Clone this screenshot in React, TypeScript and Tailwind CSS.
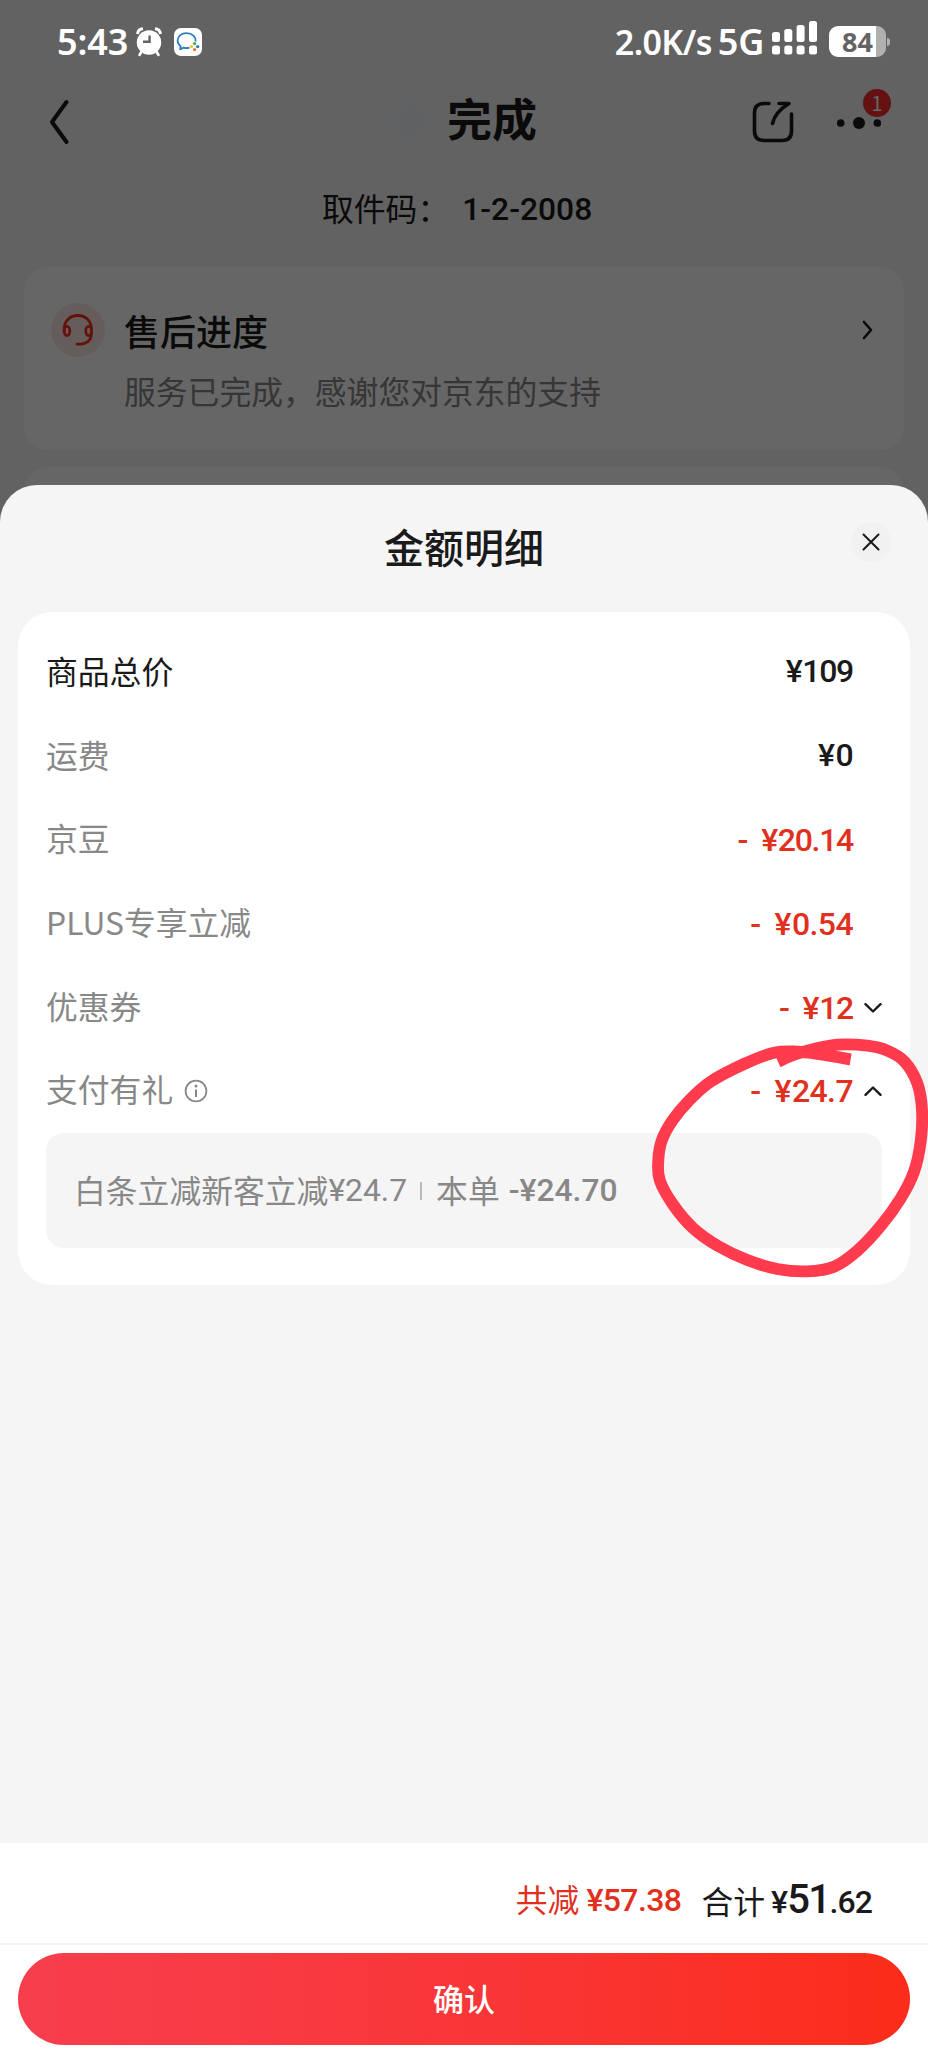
import type { ReactNode } from "react";

const PRICE_ROWS: {
  label: string;
  amount: string;
  discount?: boolean;
  strong?: boolean;
  info?: boolean;
  arrow?: "up" | "down";
}[] = [
  { label: "商品总价", amount: "¥109", strong: true },
  { label: "运费", amount: "¥0" },
  { label: "京豆", amount: "¥20.14", discount: true },
  { label: "PLUS专享立减", amount: "¥0.54", discount: true },
  { label: "优惠券", amount: "¥12", discount: true, arrow: "down" },
  { label: "支付有礼", amount: "¥24.7", discount: true, info: true, arrow: "up" },
];

const RING_POINTS: [number, number][] = [
  [1160, 328], [1070, 313], [1000, 305], [930, 308], [840, 342], [740, 395], [675, 452],
  [625, 512], [593, 572], [583, 630], [587, 690], [628, 765], [688, 835], [762, 888],
  [850, 930], [940, 957], [1030, 964], [1110, 950], [1180, 902], [1250, 828], [1310, 745],
  [1350, 665], [1370, 575], [1374, 480], [1360, 400], [1322, 335], [1270, 302], [1210, 287],
  [1120, 284], [1050, 297], [990, 314], [942, 335],
];

// Catmull-Rom through the points, written out as cubic beziers
function smoothPath(points: [number, number][]) {
  let d = `M${points[0][0]} ${points[0][1]}`;
  for (let i = 0; i < points.length - 1; i++) {
    const p0 = points[i - 1] ?? points[i];
    const p1 = points[i];
    const p2 = points[i + 1];
    const p3 = points[i + 2] ?? p2;
    d += ` C${p1[0] + (p2[0] - p0[0]) / 6} ${p1[1] + (p2[1] - p0[1]) / 6}`;
    d += ` ${p2[0] - (p3[0] - p1[0]) / 6} ${p2[1] - (p3[1] - p1[1]) / 6} ${p2[0]} ${p2[1]}`;
  }
  return d;
}

function Num({ className = "", children }: { className?: string; children: ReactNode }) {
  return (
    <span className={`font-[Roboto,'Noto_Sans_CJK_SC',sans-serif] font-medium whitespace-pre ${className}`}>
      {children}
    </span>
  );
}

function StatusBar() {
  return (
    <div className="relative z-10 flex h-[83px] items-center pl-[57px] text-white">
      <span className="w-[79px] text-[36px] leading-none font-semibold tracking-[-0.1px] font-['Noto_Sans',sans-serif]">5:43</span>
      <svg className="h-[30px] w-[26px]" viewBox="0 0 26 30" fill="none">
        <circle cx="13" cy="15.5" r="12.2" fill="#fff" />
        <path d="M1.5 7 A6 6 0 0 1 7 1.8 M19 1.8 A6 6 0 0 1 24.5 7" stroke="#fff" strokeWidth="3" />
        <path d="M6 24 L3.5 28 M20 24 L22.5 28" stroke="#fff" strokeWidth="2.6" strokeLinecap="round" />
        <path d="M13.6 8.5 V14.8 H7" stroke="#636363" strokeWidth="2.4" />
      </svg>
      <svg className="ml-[12px] h-7 w-7" viewBox="0 0 28 28" fill="none">
        <rect width="28" height="28" rx="7" fill="#fff" />
        <path d="M21.5 13.5 C22 9 18.5 5.2 12.5 5.2 C7 5.2 3.6 8.6 3.6 12.7 C3.6 15.1 4.8 16.8 6.6 18.2 L6.2 21.4 L9.6 19.6 C11.2 20.2 13.5 20.2 15.4 19.6" stroke="#2f7ec4" strokeWidth="1.8" strokeLinejoin="round" />
        <circle cx="20.6" cy="15.6" r="1.7" fill="#4caf50" />
        <circle cx="23.6" cy="18.6" r="1.7" fill="#2f7ec4" />
        <circle cx="20.6" cy="21.6" r="1.7" fill="#f0743a" />
        <circle cx="17.4" cy="18.6" r="1.7" fill="#f4c430" />
      </svg>
      <div className="ml-auto flex items-center pr-[38px] font-['Noto_Sans',sans-serif] font-semibold">
        <span className="text-[34px] leading-none tracking-[-0.6px]">2.0K/s</span>
        <span className="ml-[6px] text-[36px] leading-none tracking-[-0.3px]">5G</span>
        <svg className="mb-[7px] ml-[8px] h-[34px] w-[46px]" viewBox="0 0 46 34" fill="#fff">
          <rect x="0" y="11" width="8" height="10" rx="2.5" />
          <rect x="12.3" y="8" width="8" height="13" rx="2.5" />
          <rect x="24.6" y="4" width="8" height="17" rx="2.5" />
          <rect x="37" y="0" width="8" height="21" rx="2.5" />
          <rect x="0" y="24.5" width="8" height="9" rx="2.5" />
          <rect x="12.3" y="24.5" width="8" height="9" rx="2.5" />
          <rect x="24.6" y="24.5" width="8" height="9" rx="2.5" />
          <rect x="37" y="24.5" width="8" height="9" rx="2.5" />
        </svg>
        <div className="ml-[11px] flex h-[31px] w-[57px] items-center justify-center rounded-[9px] bg-[linear-gradient(90deg,#fff_83%,#b0b0b0_83%)] text-[27px] leading-[31px] font-bold text-[#636363]">
          84
        </div>
        <div className="ml-[1px] h-2 w-[3px] rounded-r-full bg-[#b0b0b0]" />
      </div>
    </div>
  );
}

function PageHeader() {
  return (
    <header className="flex h-[76px] items-center pl-[48px]">
      <svg className="h-[46px] w-6" viewBox="0 0 24 46" fill="none" stroke="#1a1a1a" strokeWidth="4" strokeLinecap="round" strokeLinejoin="round">
        <path d="M18.5 4 L4 24 L18.5 44" />
      </svg>
      <div className="ml-[322px] h-8 w-8 rounded-full bg-[#edf1f5] blur-[4px]" />
      <h1 className="ml-[21px] pb-[7px] text-[45px] leading-none font-bold text-[#1a1a1a]">完成</h1>
      <svg className="mt-[2px] ml-auto h-[42px] w-[42px]" viewBox="0 0 42 42" fill="none" stroke="#1a1a1a" strokeWidth="3.6" strokeLinecap="round" strokeLinejoin="round">
        <path d="M17 2.5 H12 Q2.5 2.5 2.5 12 V30 Q2.5 39.5 12 39.5 H30 Q39.5 39.5 39.5 30 V13" />
        <path d="M27 2.5 H37 Q23 11 20.5 22.5" />
      </svg>
      <div className="relative mr-[47px] ml-[43px] h-[42px] w-[44px]">
        <svg className="h-full w-full" viewBox="0 0 44 42" fill="#1a1a1a">
          <circle cx="3.7" cy="23" r="3.8" />
          <circle cx="22" cy="23" r="6" />
          <circle cx="40.3" cy="23" r="3.8" />
        </svg>
        <span className="absolute -top-[11px] left-[26px] flex h-7 w-7 items-center justify-center rounded-full bg-[#fa2c2f] text-[20px] leading-none text-white">
          1
        </span>
      </div>
    </header>
  );
}

function ServiceCard() {
  return (
    <section className="mx-6 mt-[22px] flex h-[183px] rounded-[24px] bg-white pt-[36px] pr-[30px] pl-[27px]">
      <div className="flex h-[54px] w-[54px] items-center justify-center rounded-full bg-[#fbe8e5]">
        <svg className="h-[34px] w-[34px]" viewBox="0 0 34 34" fill="none" stroke="#fa2c19" strokeWidth="2.8" strokeLinecap="round">
          <path d="M3.2 18 V16 C3.2 8 9 2.5 16.8 2.5 C24.6 2.5 30.4 8 30.4 16 V20.5 C30.4 27.5 25.5 31.5 16 31.2" />
          <ellipse cx="6" cy="18" rx="2.8" ry="4.6" />
          <ellipse cx="27.6" cy="18" rx="2.8" ry="4.6" />
        </svg>
      </div>
      <div className="ml-[19px]">
        <h2 className="mt-[7px] text-[36px] leading-[40px] font-medium text-[#1a1a1a]">售后进度</h2>
        <p className="mt-[22px] text-[31.8px] leading-[36px] text-[#888]">服务已完成，感谢您对京东的支持</p>
      </div>
      <svg className="mt-[17px] ml-auto h-5 w-[12px]" viewBox="0 0 12 20" fill="none" stroke="#1a1a1a" strokeWidth="2.6" strokeLinecap="round" strokeLinejoin="round">
        <path d="M2 2 L9 10 L2 18" />
      </svg>
    </section>
  );
}

function PriceRow({ row }: { row: (typeof PRICE_ROWS)[number] }) {
  // Roboto's 1 is as wide as the other digits, so amounts with a 1 get tighter tracking
  const tracking = row.amount.includes("1") ? "tracking-[-1.3px]" : "tracking-[-0.6px]";

  return (
    <div className="flex h-[83.7px] items-center">
      <span className={`pb-[4px] text-[31.8px] leading-none ${row.strong ? "text-[#1a1a1a]" : "text-[#888]"}`}>
        {row.label}
      </span>
      {row.info && (
        <svg className="ml-[11px] h-6 w-6" viewBox="0 0 24 24" fill="none" stroke="#888" strokeWidth="1.8">
          <circle cx="12" cy="12" r="10.4" />
          <path d="M12 10.5 V18" strokeWidth="2" />
          <circle cx="12" cy="7" r="1.5" fill="#888" stroke="none" />
        </svg>
      )}
      <Num className={`ml-auto text-[32px] leading-none ${tracking} ${row.discount ? "text-[#e1301e]" : "pb-[4px] text-[#1a1a1a]"}`}>
        {row.discount && <span className="mr-[14px]">-</span>}
        <span className="mr-[1px]">¥</span>
        {row.amount.slice(1)}
      </Num>
      <div className="ml-[11px] w-[18px]">
        {row.arrow && (
          <svg
            className={`h-[10px] w-[18px] ${row.arrow === "up" ? "rotate-180" : ""}`}
            viewBox="0 0 18 10"
            fill="none"
            stroke="#1a1a1a"
            strokeWidth="2.4"
            strokeLinecap="round"
            strokeLinejoin="round"
          >
            <path d="M1.5 1.2 L9 8.5 L16.5 1.2" />
          </svg>
        )}
      </div>
    </div>
  );
}

// Hand-drawn marker ring, floats over the card
function MarkerRing() {
  return (
    <svg
      className="pointer-events-none absolute top-[1030px] left-[640px] z-20 h-[260px] w-[288px]"
      viewBox="528 240 864 780"
      fill="none"
      stroke="#ff3b4d"
      strokeWidth="35.5"
      strokeLinejoin="round"
    >
      <path d={smoothPath(RING_POINTS)} />
    </svg>
  );
}

function AmountSheet() {
  return (
    <div className="relative z-10 flex h-[1578px] flex-col rounded-t-[37px] bg-[#f5f5f5]">
      <div className="flex h-[127px] items-center justify-center pb-[5px]">
        <h2 className="text-[40px] leading-none font-medium text-[#1a1a1a]">金额明细</h2>
        <button className="absolute top-[37px] right-[37px] flex h-10 w-10 items-center justify-center rounded-full bg-[#f1f1f1]">
          <svg className="h-[18px] w-[18px]" viewBox="0 0 18 18" stroke="#1a1a1a" strokeWidth="2" strokeLinecap="round">
            <path d="M1.5 1.5 L16.5 16.5 M16.5 1.5 L1.5 16.5" />
          </svg>
        </button>
      </div>
      <section className="mx-[18px] h-[673px] rounded-[34px] bg-white px-7 pt-[19px]">
        {PRICE_ROWS.map((row) => (
          <PriceRow key={row.label} row={row} />
        ))}
        <div className="flex h-[115px] items-center rounded-[18px] bg-[#f5f5f5] pl-[28px] text-[31.8px] leading-none text-[#888]">
          <span className="pb-[2px]">白条立减新客立减</span>
          <Num className="font-normal">¥24.7</Num>
          <span className="mr-[14px] ml-[13px] h-[18px] w-[2px] bg-[#bbb]" />
          <span className="pb-[2px]">本单</span>
          <Num className="ml-[9px]">-¥24.70</Num>
        </div>
      </section>
      <footer className="mt-auto h-[220px] bg-white">
        <div className="flex h-[102px] items-center justify-end border-b-2 border-[#f4f4f4] pt-[12px] pr-[56px] text-[31.8px] leading-none">
          <span className="text-[#e1301e]">共减</span>
          <Num className="ml-[7px] pt-[2px] text-[32px] tracking-[-0.6px] text-[#e1301e]">¥57.38</Num>
          <span className="ml-[20px] pt-[3px] text-[#1a1a1a]">合计</span>
          <Num className="ml-[6px] pt-px text-[32px] tracking-[-0.9px] text-[#1a1a1a]">
            ¥<span className="text-[40px] tracking-[-1.6px]">51</span>.62
          </Num>
        </div>
        <button className="mx-[18px] mt-[8px] flex h-[92px] w-[892px] items-center justify-center rounded-full bg-linear-to-r from-[#f73e4d] to-[#fb2c18] pb-[4px] text-[31px] leading-none font-medium text-white">
          确认
        </button>
      </footer>
    </div>
  );
}

export default function App() {
  return (
    <div className="relative h-[2063px] w-[928px] overflow-hidden bg-[#f5f5f5] font-['Noto_Sans_CJK_SC',sans-serif]">
      <div className="absolute inset-0 z-[5] bg-black/60" />
      <StatusBar />
      <PageHeader />
      <div className="mt-[20px] flex h-[60px] items-center pl-[322px] text-[31.8px] leading-none text-[#1a1a1a]">
        <span className="pb-[3px]">取件码：</span>
        <Num className="ml-[13px] pt-[2px]">1-2-2008</Num>
      </div>
      <div className="h-[6px]" />
      <ServiceCard />
      <div className="mx-6 mt-[17px] -mb-[30px] h-[48px] rounded-t-[24px] bg-white" />
      <AmountSheet />
      <MarkerRing />
    </div>
  );
}
